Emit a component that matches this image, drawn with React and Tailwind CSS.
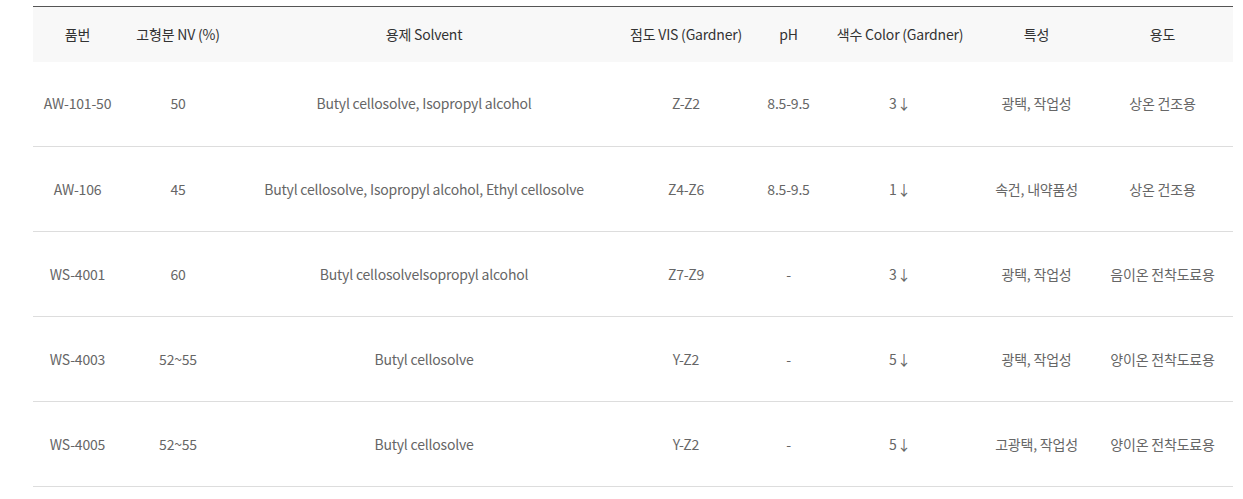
import React from 'react';

const rows = [
  { code: 'AW-101-50', nv: '50', solvent: 'Butyl cellosolve, Isopropyl alcohol', vis: 'Z-Z2', ph: '8.5-9.5', color: '3', feature: '광택, 작업성', use: '상온 건조용' },
  { code: 'AW-106', nv: '45', solvent: 'Butyl cellosolve, Isopropyl alcohol, Ethyl cellosolve', vis: 'Z4-Z6', ph: '8.5-9.5', color: '1', feature: '속건, 내약품성', use: '상온 건조용' },
  { code: 'WS-4001', nv: '60', solvent: 'Butyl cellosolveIsopropyl alcohol', vis: 'Z7-Z9', ph: '-', color: '3', feature: '광택, 작업성', use: '음이온 전착도료용' },
  { code: 'WS-4003', nv: '52~55', solvent: 'Butyl cellosolve', vis: 'Y-Z2', ph: '-', color: '5', feature: '광택, 작업성', use: '양이온 전착도료용' },
  { code: 'WS-4005', nv: '52~55', solvent: 'Butyl cellosolve', vis: 'Y-Z2', ph: '-', color: '5', feature: '고광택, 작업성', use: '양이온 전착도료용' },
];

const headers = ['품번', '고형분 NV (%)', '용제 Solvent', '점도 VIS (Gardner)', 'pH', '색수 Color (Gardner)', '특성', '용도'];

const App = () => {
  return (
    <div className="bg-white min-h-screen pt-[6px] pl-[33px] font-['Noto_Sans_CJK_KR','Noto_Sans',sans-serif]">
      <table className="w-[1200px] table-fixed border-collapse text-center text-[14px] tracking-[-0.2px]">
        <colgroup>
          <col className="w-[89px]" />
          <col className="w-[112px]" />
          <col className="w-[380px]" />
          <col className="w-[144px]" />
          <col className="w-[61px]" />
          <col className="w-[162px]" />
          <col className="w-[111px]" />
          <col className="w-[141px]" />
        </colgroup>
        <thead>
          <tr className="border-t border-[#555] bg-[#f8f8f8]">
            {headers.map((h) => (
              <th key={h} className="h-[55px] p-0 font-normal text-[#333]">
                {h}
              </th>
            ))}
          </tr>
        </thead>
        <tbody>
          {rows.map((r) => (
            <tr key={r.code} className="border-b border-[#dddddd] text-[#666]">
              <td className="h-[85px] p-0">{r.code}</td>
              <td className="p-0">{r.nv}</td>
              <td className="p-0">{r.solvent}</td>
              <td className="p-0">{r.vis}</td>
              <td className="p-0">{r.ph}</td>
              <td className="p-0 tracking-normal">{r.color}↓</td>
              <td className="p-0">{r.feature}</td>
              <td className="p-0">{r.use}</td>
            </tr>
          ))}
        </tbody>
      </table>
    </div>
  );
};

export default App;
